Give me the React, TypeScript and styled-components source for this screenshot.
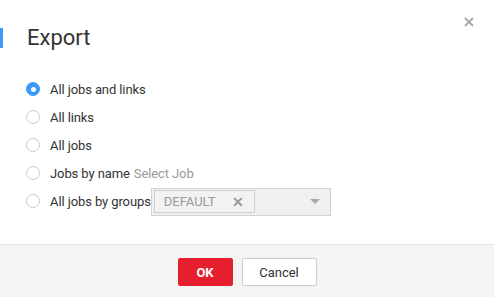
import React from "react";
import styled, { createGlobalStyle } from "styled-components";

const GlobalStyle = createGlobalStyle`
  html, body {
    margin: 0;
    padding: 0;
    background: #fff;
  }
  body {
    font-family: Roboto, "Liberation Sans", Arial, sans-serif;
    color: #333;
  }
`;

const Dialog = styled.div`
  position: relative;
  width: 494px;
  height: 297px;
  display: flex;
  flex-direction: column;
  background: #fff;
  overflow: hidden;
`;

const CloseButton = styled.button`
  position: absolute;
  top: 16px;
  right: 19px;
  width: 12px;
  height: 12px;
  padding: 0;
  border: none;
  background: none;
  cursor: pointer;
  display: flex;
  align-items: center;
  justify-content: center;
`;

const Header = styled.div`
  padding-top: 28px;
  height: 47px;
  box-sizing: border-box;
`;

const Title = styled.h2`
  margin: 0;
  height: 20px;
  line-height: 20px;
  border-left: 3px solid #3b99fc;
  padding-left: 24px;
  font-size: 22px;
  font-weight: 400;
  color: #333;
`;

const Body = styled.div`
  flex: 1;
  padding: 28px 0 0 26px;
  display: flex;
  flex-direction: column;
`;

const Row = styled.label`
  display: flex;
  align-items: center;
  height: 28px;
  font-size: 13px;
  letter-spacing: -0.1px;
  color: #333;
  cursor: pointer;
`;

const RadioDot = styled.span<{ checked: boolean }>`
  width: 14px;
  height: 14px;
  border-radius: 50%;
  box-sizing: border-box;
  margin-right: 10px;
  flex-shrink: 0;
  background: ${(p) => (p.checked ? "#3b99fc" : "#fff")};
  border: 1px solid ${(p) => (p.checked ? "#3b99fc" : "#ccc")};
  display: flex;
  align-items: center;
  justify-content: center;

  &::after {
    content: "";
    display: ${(p) => (p.checked ? "block" : "none")};
    width: 5px;
    height: 5px;
    border-radius: 50%;
    background: #fff;
  }
`;

const Hint = styled.span`
  color: #999;
  margin-left: 4px;
`;

const SelectBox = styled.div`
  width: 180px;
  height: 28px;
  box-sizing: border-box;
  border: 1px solid #d3d3d3;
  background: #f0f0f0;
  display: flex;
  align-items: center;
  padding: 0 2px;
  margin-top: 1px;
  letter-spacing: normal;
`;

const Tag = styled.span`
  width: 101px;
  height: 23px;
  box-sizing: border-box;
  border: 1px solid #cfcfcf;
  background: #f2f2f2;
  display: flex;
  align-items: center;
  justify-content: space-between;
  padding: 0 10px 0 9px;
  color: #999;
  font-size: 13px;
`;

const TagClose = styled.span`
  color: #9a9a9a;
  font-size: 14px;
  font-weight: 700;
  line-height: 1;
`;

const Caret = styled.span`
  margin-left: auto;
  margin-right: 8px;
  width: 0;
  height: 0;
  border-left: 5px solid transparent;
  border-right: 5px solid transparent;
  border-top: 5px solid #aaa;
`;

const Footer = styled.div`
  height: 53px;
  box-sizing: border-box;
  border-top: 1px solid #e6e6e6;
  background: #f4f4f4;
  display: flex;
  justify-content: center;
  align-items: flex-start;
  gap: 9px;
  padding-top: 13px;
`;

const Button = styled.button<{ primary?: boolean }>`
  height: 28px;
  padding: 0;
  width: ${(p) => (p.primary ? "55px" : "75px")};
  box-sizing: border-box;
  font-family: Roboto, "Liberation Sans", Arial, sans-serif;
  font-size: 13px;
  font-weight: ${(p) => (p.primary ? 700 : 400)};
  color: ${(p) => (p.primary ? "#fff" : "#333")};
  background: ${(p) => (p.primary ? "#e61f2e" : "#fff")};
  border: 1px solid ${(p) => (p.primary ? "#e61f2e" : "#ccc")};
  border-radius: 2px;
  cursor: pointer;
`;

const options = [
  "All jobs and links",
  "All links",
  "All jobs",
  "Jobs by name",
  "All jobs by groups",
];

export default function App() {
  const selected = 0;
  return (
    <>
      <GlobalStyle />
      <Dialog>
        <CloseButton aria-label="Close">
          <svg width="10" height="10" viewBox="0 0 10 10">
            <path d="M1 1L9 9M9 1L1 9" stroke="#aaa" strokeWidth="2" />
          </svg>
        </CloseButton>
        <Header>
          <Title>Export</Title>
        </Header>
        <Body>
          {options.map((label, i) => (
            <Row key={label}>
              <RadioDot checked={i === selected} />
              {label}
              {i === 3 && <Hint>Select Job</Hint>}
              {i === 4 && (
                <SelectBox>
                  <Tag>
                    DEFAULT
                    <TagClose>✕</TagClose>
                  </Tag>
                  <Caret />
                </SelectBox>
              )}
            </Row>
          ))}
        </Body>
        <Footer>
          <Button primary>OK</Button>
          <Button>Cancel</Button>
        </Footer>
      </Dialog>
    </>
  );
}
